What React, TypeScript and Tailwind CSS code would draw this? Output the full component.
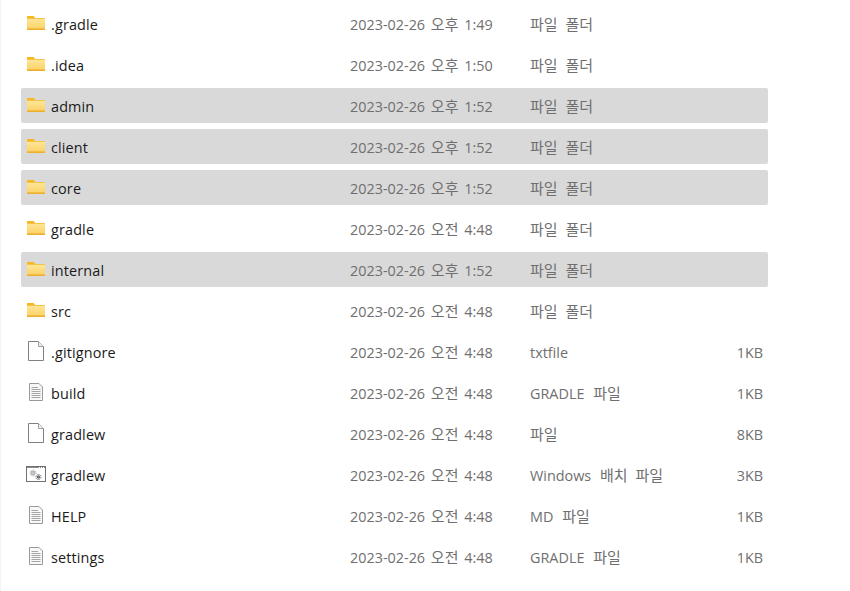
const Folder = () => (
  <svg width="22" height="22" viewBox="0 0 22 22" className="block">
    <defs>
      <linearGradient id="fb" x1="0" y1="0" x2="0" y2="1">
        <stop offset="0" stopColor="#fee595" />
        <stop offset="1" stopColor="#fbd36a" />
      </linearGradient>
    </defs>
    <path d="M1 4.5Q1 4 1.5 4H7.5L9 5.5V8H1Z" fill="#f8b71c" />
    <path d="M1 6H18.5Q19 6 19 6.5V17.5Q19 18 18.5 18H1.5Q1 18 1 17.5Z" fill="#f3c34a" />
    <path d="M1 7H19V16.5H1Z" fill="url(#fb)" />
    <path d="M1 16.5H19V17.5Q19 18 18.5 18H1.5Q1 18 1 17.5Z" fill="#eeb02c" />
  </svg>
);

const Blank = () => (
  <svg width="22" height="22" viewBox="0 0 22 22" className="block">
    <path d="M2.5 1.5H12.5L17.5 6.5V20.5H2.5Z" fill="#fff" stroke="#808080" />
    <path d="M12.5 1.5V6.5H17.5" fill="#f0f0f0" stroke="#a0a0a0" />
  </svg>
);

const TextDoc = () => (
  <svg width="22" height="22" viewBox="0 0 22 22" className="block">
    <path d="M3.5 2.5H13L16.5 6V19.5H3.5Z" fill="#f8f8f8" stroke="#999999" />
    <path d="M5.5 6.5H12M5.5 8.5H14.5M5.5 10.5H14.5M5.5 12.5H14.5M5.5 14.5H14.5M5.5 16.5H14.5" stroke="#a6a6a6" />
  </svg>
);

const Batch = () => (
  <svg width="22" height="22" viewBox="0 0 22 22" className="block">
    <rect x="0.5" y="3.5" width="19" height="15" fill="#fff" stroke="#707070" />
    <rect x="1" y="4" width="18" height="1" fill="#8c8c8c" />
    <path d="M13 4.5H14M15 4.5H16M17 4.5H18" stroke="#fff" />
    <circle cx="7" cy="10" r="2" fill="#c4c8cc" stroke="#a9adb2" />
    <circle cx="7" cy="10" r="3" fill="none" stroke="#a9adb2" strokeDasharray="1 1" />
    <circle cx="12.5" cy="14" r="1.3" fill="#8a8e93" stroke="#55595f" />
    <circle cx="12.5" cy="14" r="2.6" fill="none" stroke="#55595f" strokeDasharray="1 1" />
  </svg>
);

type Row = { name: string; date: string; type: string; size?: string; icon: "folder" | "blank" | "text" | "batch"; selected?: boolean };

const rows: Row[] = [
  { name: ".gradle", date: "2023-02-26 오후 1:49", type: "파일 폴더", icon: "folder" },
  { name: ".idea", date: "2023-02-26 오후 1:50", type: "파일 폴더", icon: "folder" },
  { name: "admin", date: "2023-02-26 오후 1:52", type: "파일 폴더", icon: "folder", selected: true },
  { name: "client", date: "2023-02-26 오후 1:52", type: "파일 폴더", icon: "folder", selected: true },
  { name: "core", date: "2023-02-26 오후 1:52", type: "파일 폴더", icon: "folder", selected: true },
  { name: "gradle", date: "2023-02-26 오전 4:48", type: "파일 폴더", icon: "folder" },
  { name: "internal", date: "2023-02-26 오후 1:52", type: "파일 폴더", icon: "folder", selected: true },
  { name: "src", date: "2023-02-26 오전 4:48", type: "파일 폴더", icon: "folder" },
  { name: ".gitignore", date: "2023-02-26 오전 4:48", type: "txtfile", size: "1KB", icon: "blank" },
  { name: "build", date: "2023-02-26 오전 4:48", type: "GRADLE 파일", size: "1KB", icon: "text" },
  { name: "gradlew", date: "2023-02-26 오전 4:48", type: "파일", size: "8KB", icon: "blank" },
  { name: "gradlew", date: "2023-02-26 오전 4:48", type: "Windows 배치 파일", size: "3KB", icon: "batch" },
  { name: "HELP", date: "2023-02-26 오전 4:48", type: "MD 파일", size: "1KB", icon: "text" },
  { name: "settings", date: "2023-02-26 오전 4:48", type: "GRADLE 파일", size: "1KB", icon: "text" },
];

const icons = { folder: Folder, blank: Blank, text: TextDoc, batch: Batch };

const Mixed = ({ text, wide }: { text: string; wide?: boolean }) => (
  <>
    {text.split(/([가-힣]+(?: [가-힣]+)*)/).map((part, i, all) =>
      /[가-힣]/.test(part) ? (
        <span
          key={i}
          className={`text-[15px] leading-none [word-spacing:4px] ${all[0] === "" ? "" : wide ? "ml-[5px]" : "mx-[2px]"}`}
        >
          {part}
        </span>
      ) : (
        <span key={i}>{part}</span>
      )
    )}
  </>
);

export default function App() {
  return (
    <div className="h-[591px] w-[850px] overflow-hidden bg-white border-l border-[#f3f3f3] pl-[20px] pt-[6px] flex flex-col gap-[6px] font-['Open_Sans','Noto_Sans_CJK_KR',sans-serif] text-[14.4px] leading-[20px]">
      {rows.map((r, i) => {
        const Icon = icons[r.icon];
        return (
          <div key={i} className={`flex h-[35px] w-[747px] shrink-0 rounded-[2px] ${r.selected ? "bg-[#d9d9d9]" : ""}`}>
            <div className="w-[30px] shrink-0 pl-[5px] pt-[6px]">
              <Icon />
            </div>
            <div className="w-[299px] shrink-0 pt-[9px] tracking-[0.15px] text-[#1a1a1a]">{r.name}</div>
            <div className="w-[180px] shrink-0 pt-[9px] text-[#6f6f6f]"><Mixed text={r.date} /></div>
            <div className="w-[150px] shrink-0 pt-[9px] text-[#6f6f6f]"><Mixed text={r.type} wide /></div>
            <div className="flex-1 pr-[5px] pt-[9px] text-right text-[#6f6f6f]">{r.size}</div>
          </div>
        );
      })}
    </div>
  );
}
